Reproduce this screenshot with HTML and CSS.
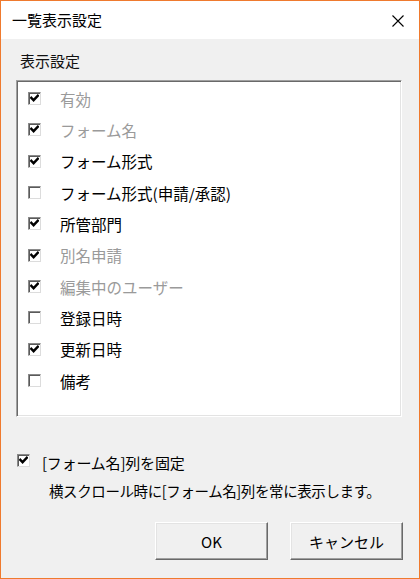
FILE: index.html
```html
<!DOCTYPE html>
<html lang="ja">
<head>
<meta charset="utf-8">
<link rel="stylesheet" href="styles.css">
</head>
<body>
<div class="window">
  <div class="titlebar">
    <span class="title">一覧表示設定</span>
    <svg class="close" width="12" height="12" viewBox="0 0 12 12"><path d="M0.5 0.5 L11.5 11.5 M11.5 0.5 L0.5 11.5" stroke="#000" stroke-width="1.1" fill="none"/></svg>
  </div>
  <div class="content">
    <div class="group-label">表示設定</div>
    <div class="listbox">
      <div class="row disabled"><span class="cb checked"></span><span class="txt">有効</span></div>
      <div class="row disabled"><span class="cb checked"></span><span class="txt">フォーム名</span></div>
      <div class="row"><span class="cb checked"></span><span class="txt">フォーム形式</span></div>
      <div class="row"><span class="cb"></span><span class="txt">フォーム形式(申請/承認)</span></div>
      <div class="row"><span class="cb checked"></span><span class="txt">所管部門</span></div>
      <div class="row disabled"><span class="cb checked"></span><span class="txt">別名申請</span></div>
      <div class="row disabled"><span class="cb checked"></span><span class="txt">編集中のユーザー</span></div>
      <div class="row"><span class="cb"></span><span class="txt">登録日時</span></div>
      <div class="row"><span class="cb checked"></span><span class="txt">更新日時</span></div>
      <div class="row"><span class="cb"></span><span class="txt">備考</span></div>
    </div>
    <div class="fix-row"><span class="cb checked"></span><span class="fix-txt">[フォーム名]列を固定</span></div>
    <div class="note">横スクロール時に[フォーム名]列を常に表示します。</div>
    <div class="buttons">
      <button class="btn">OK</button>
      <button class="btn">キャンセル</button>
    </div>
  </div>
</div>
</body>
</html>
```
FILE: styles.css
```css
html, body {
  margin: 0;
  padding: 0;
  background: #ffffff;
}
body {
  font-family: "Noto Sans CJK JP", "Noto Sans", sans-serif;
  color: #000;
}
.window {
  width: 420px;
  height: 579px;
  box-sizing: border-box;
  border: 1px solid #ef7a2e;
  background: #f0f0f0;
  display: flex;
  flex-direction: column;
}
.titlebar {
  height: 38px;
  flex: none;
  background: #ffffff;
  display: flex;
  align-items: center;
  justify-content: space-between;
  padding: 0 15px 0 11px;
}
.title {
  font-size: 15px;
  line-height: 20px;
}
.close {
  display: block;
  margin-top: 1px;
}
.content {
  flex: 1;
  display: flex;
  flex-direction: column;
  padding: 12px 15px 0 15px;
}
.group-label {
  font-size: 15px;
  line-height: 20px;
  padding-left: 4px;
  color: #111;
}
.listbox {
  margin-top: 9px;
  width: 386px;
  height: 337px;
  box-sizing: border-box;
  background: #fff;
  border: 1px solid;
  border-color: #a0a0a0 #ffffff #ffffff #a0a0a0;
  box-shadow: inset 1px 1px 0 #696969, inset -1px -1px 0 #e3e3e3;
  padding: 2px 0 0 11px;
}
.row {
  height: 31.33px;
  display: flex;
  align-items: center;
}
.cb {
  width: 13px;
  height: 13px;
  box-sizing: border-box;
  flex: none;
  background: #fff;
  border: 1px solid;
  border-color: #8a8a8a #dcdcdc #dcdcdc #8a8a8a;
  box-shadow: inset 1px 1px 0 #5a5a5a;
  position: relative;
}
.cb.checked::after {
  content: "";
  position: absolute;
  left: 1px;
  top: 1px;
  width: 9px;
  height: 9px;
  background: no-repeat center / 9px 9px url("data:image/svg+xml;utf8,<svg xmlns='http://www.w3.org/2000/svg' width='9' height='9' viewBox='0 0 9 9'><polyline points='1.3,3.8 3.6,6.2 7.8,1.8' fill='none' stroke='black' stroke-width='2.4' stroke-linecap='square'/></svg>");
}
.txt {
  margin-left: 19px;
  font-size: 15.5px;
  line-height: 20px;
  white-space: nowrap;
}
.row.disabled .txt {
  color: #9a9a9a;
}
.fix-row {
  margin-top: 30px;
  display: flex;
  align-items: center;
  padding-left: 1px;
}
.fix-txt {
  margin-left: 12px;
  font-size: 15px;
  line-height: 20px;
  margin-top: 6px;
  letter-spacing: -0.2px;
}
.note {
  margin-top: 8px;
  padding-left: 33px;
  font-size: 14.5px;
  letter-spacing: -0.4px;
  line-height: 20px;
}
.buttons {
  margin-top: 21px;
  display: flex;
  justify-content: flex-end;
  gap: 22px;
  padding-right: 1px;
}
.btn {
  width: 113px;
  height: 38px;
  box-sizing: border-box;
  background: #f0f0f0;
  border: 1px solid;
  border-color: #ffffff #696969 #696969 #ffffff;
  box-shadow: inset -1px -1px 0 #a0a0a0, inset 1px 1px 0 #e3e3e3;
  font-family: "Noto Sans CJK JP", "Noto Sans", sans-serif;
  font-size: 15px;
  color: #000;
  padding: 0;
}
```
